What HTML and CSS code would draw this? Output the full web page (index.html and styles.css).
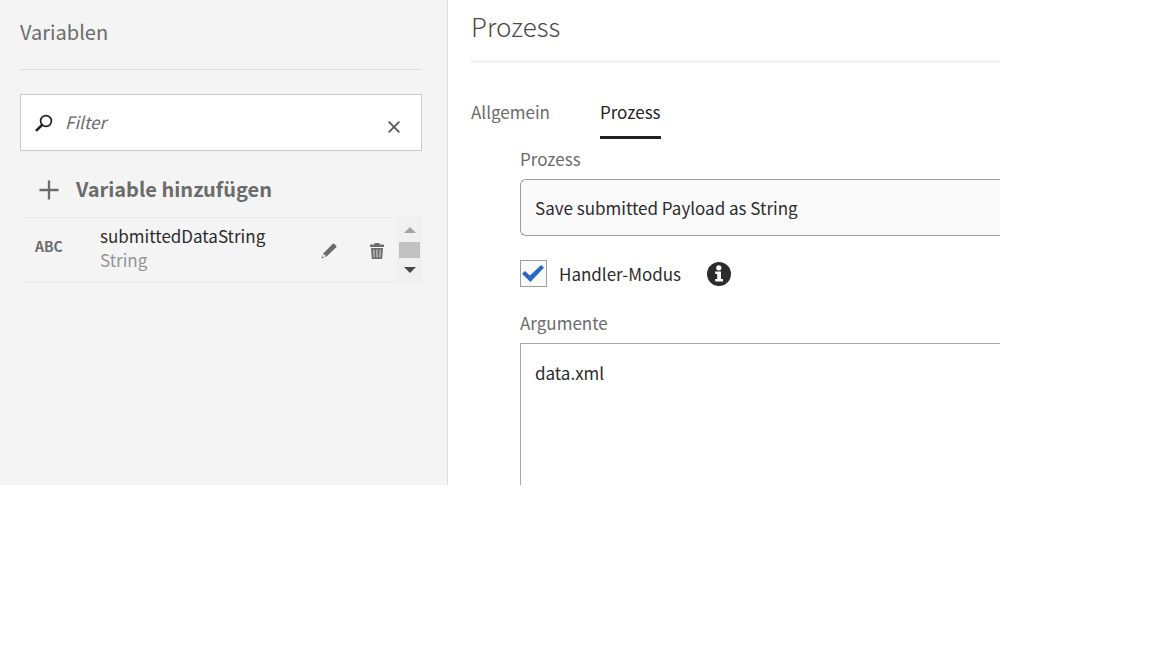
FILE: index.html
```html
<!DOCTYPE html>
<html lang="de">
<head>
<meta charset="utf-8">
<meta name="viewport" content="width=device-width, initial-scale=1">
<title>Prozess</title>
<link rel="stylesheet" href="styles.css">
</head>
<body>
<div class="editor">
  <aside class="sidebar">
    <h2 class="sidebar-title">Variablen</h2>
    <div class="filter">
      <svg class="filter-icon" width="18" height="18" viewBox="0 0 18 18" aria-hidden="true"><circle cx="11" cy="7" r="5.4" fill="none" stroke="#222" stroke-width="1.7"/><path d="M7 11 1.8 16.2" stroke="#222" stroke-width="2.6" stroke-linecap="round"/></svg>
      <input class="filter-input" type="text" placeholder="Filter" aria-label="Filter">
      <button class="icon-button clear" type="button" aria-label="Filter leeren"><svg width="12" height="12" viewBox="0 0 12 12"><path d="M.7.7 11.300 11.300M11.300.7.7 11.300" stroke="#5c5c5c" stroke-width="1.900"/></svg></button>
    </div>
    <button class="add" type="button">
      <svg class="add-icon" width="20" height="20" viewBox="0 0 20 20" aria-hidden="true"><path d="M10 .5v19M.5 10h19" stroke="#6b6b6b" stroke-width="2.300"/></svg>
      <span>Variable hinzufügen</span>
    </button>
    <div class="list">
      <div class="item">
        <span class="item-type">ABC</span>
        <div class="item-text">
          <div class="item-name">submittedDataString</div>
          <div class="item-kind">String</div>
        </div>
        <button class="icon-button" type="button" aria-label="Bearbeiten"><svg width="16" height="16" viewBox="0 0 16 16"><path d="M11.8.8a1 1 0 0 1 1.400 0l2 2a1 1 0 0 1 0 1.400L5.600 13.600.5 15.600l2-5.300z" fill="#6b6b6b"/><path d="m2.800 11 2.300 2.300-2.800 1-.7-.7z" fill="#f4f4f4"/></svg></button>
        <button class="icon-button" type="button" aria-label="Löschen"><svg width="16" height="16" viewBox="0 0 16 16"><path d="M5.500 0h5v1.500H14c.7 0 1 .4 1 1V4H1V2.500c0-.6.3-1 1-1h3.500zM2 5h12l-.8 10.200a.8.8 0 0 1-.8.8H3.600a.8.8 0 0 1-.8-.8z" fill="#6b6b6b"/><path d="m4.700 6.500.5 8M8 6.500v8m3.300-8-.5 8" stroke="#d4d4d4" stroke-width="1.100"/></svg></button>
      </div>
      <div class="scrollbar">
        <button class="icon-button" type="button" aria-label="Nach oben"><svg width="12" height="6" viewBox="0 0 12 6"><path d="M0 6 6 0l6 6z" fill="#a3a3a3"/></svg></button>
        <div class="thumb"></div>
        <button class="icon-button" type="button" aria-label="Nach unten"><svg width="12" height="6" viewBox="0 0 12 6"><path d="M0 0 6 6l6-6z" fill="#484848"/></svg></button>
      </div>
    </div>
  </aside>
  <main class="panel">
    <h1 class="panel-title">Prozess</h1>
    <div class="tabs" role="tablist">
      <button class="tab" type="button" role="tab" aria-selected="false">Allgemein</button>
      <button class="tab active" type="button" role="tab" aria-selected="true">Prozess</button>
    </div>
    <form class="form">
      <label class="label" for="process">Prozess</label>
      <select class="select" id="process"><option>Save submitted Payload as String</option></select>
      <div class="check-row">
        <input class="check" type="checkbox" id="handler" checked>
        <label class="check-label" for="handler">Handler-Modus</label>
        <button class="icon-button" type="button" aria-label="Info"><svg width="24" height="24" viewBox="0 0 24 24"><circle cx="12" cy="12" r="12" fill="#2c2c2c"/><circle cx="11.800" cy="5.800" r="2.600" fill="#fff"/><path d="M8.200 9.500h5.800v7.600h2v2.500H8.200v-2.500h2v-5.200h-2z" fill="#fff"/></svg></button>
      </div>
      <label class="label" for="args">Argumente</label>
      <textarea class="textarea" id="args" rows="5">data.xml</textarea>
    </form>
  </main>
</div>
</body>
</html>
```
FILE: styles.css
```css
* { box-sizing: border-box; }
body {
  margin: 0;
  background: #fff;
  color: #2c2c2c;
  font: 17px/24px "Noto Sans CJK SC", "Noto Sans", sans-serif;
}
button, input, select, textarea { font: inherit; color: inherit; }
h1, h2 { margin: 0; }
.editor {
  display: grid;
  grid-template-columns: 448px 1fr;
  padding-right: 152px;
}
.sidebar {
  padding: 20px 25px 0 20px;
  background: #f4f4f4;
  border-right: 1px solid #dcdcdc;
}
.sidebar-title {
  padding-bottom: 25px;
  border-bottom: 1px solid #dedede;
  color: #6b6b6b;
  font-size: 20px;
  font-weight: 400;
  line-height: 24px;
}
.filter {
  display: flex;
  align-items: center;
  height: 57px;
  margin-top: 24px;
  padding: 0 20px 0 14px;
  border: 1px solid #cacaca;
  background: #fff;
}
.filter-icon { flex: none; }
.filter-input {
  flex: 1;
  min-width: 0;
  margin-left: 12px;
  padding: 0 0 1px;
  border: 0;
  outline: 0;
  background: none;
}
.filter-input::placeholder { color: #6b6b6b; font-style: italic; opacity: 1; }
.icon-button {
  display: flex;
  padding: 0;
  border: 0;
  background: none;
}
.clear { padding: 9px 1px 0; }
.add {
  display: flex;
  align-items: center;
  gap: 17px;
  height: 66px;
  padding: 9px 19px 0;
  border: 0;
  background: none;
  color: #6b6b6b;
  font-size: 20px;
  font-weight: 700;
}
.add-icon { margin-top: 3px; }
.list { display: flex; }
.item {
  display: flex;
  flex: 1;
  align-items: center;
  padding: 6px 12px 6px 15px;
  border: solid #e8e8e8;
  border-width: 1px 0;
  border-radius: 6px;
}
.item-type {
  width: 65px;
  padding-bottom: 8px;
  color: #6b6b6b;
  font-size: 14px;
  font-weight: 700;
}
.item-text { flex: 1; padding-bottom: 4px; }
.item-kind { color: #959595; }
.item .icon-button { margin-left: 32px; padding-top: 2px; }
.scrollbar {
  display: flex;
  flex-direction: column;
  align-items: center;
  justify-content: space-between;
  width: 25px;
  padding: 10px 2px;
  background: #f0f0f0;
}
.thumb { width: 100%; height: 16px; background: #c1c1c1; }
.panel { padding: 8px 0 0 23px; }
.panel-title {
  padding-bottom: 16px;
  border-bottom: 3px solid #f2f2f2;
  color: #4b4b4b;
  font-size: 26px;
  font-weight: 300;
  line-height: 36px;
}
.tabs { display: flex; gap: 50px; margin-top: 37px; }
.tab {
  padding: 0 0 12px;
  border: 0;
  border-bottom: 3px solid transparent;
  background: none;
  color: #6b6b6b;
}
.tab.active { border-color: #222; color: #222; }
.form { padding: 8px 0 0 49px; }
.label { display: block; color: #6b6b6b; }
.select {
  display: block;
  width: 100%;
  height: 57px;
  margin-top: 8px;
  padding: 0 14px;
  appearance: none;
  border: 1px solid #9e9e9e;
  border-right: 0;
  border-radius: 6px 0 0 6px;
  background: #fafafa;
}
.check-row { display: flex; align-items: center; margin: 24px 0; }
.check {
  width: 27px;
  height: 27px;
  margin: 0 12px 0 0;
  appearance: none;
  border: 1px solid #9e9e9e;
  background: #fafafa;
}
.check:checked::before {
  content: "";
  display: block;
  width: 22px;
  height: 17px;
  margin: 4px 1px;
  background: #2a69c8;
  clip-path: polygon(0 52%, 13% 36%, 36% 62%, 87% 0, 100% 16%, 38% 100%);
}
.check-label { margin-right: 26px; }
.textarea {
  display: block;
  width: 100%;
  margin-top: 8px;
  padding: 17px 14px 4px;
  resize: none;
  border: solid #a8a8a8;
  border-width: 1px 0 0 1px;
  outline: 0;
}
```
